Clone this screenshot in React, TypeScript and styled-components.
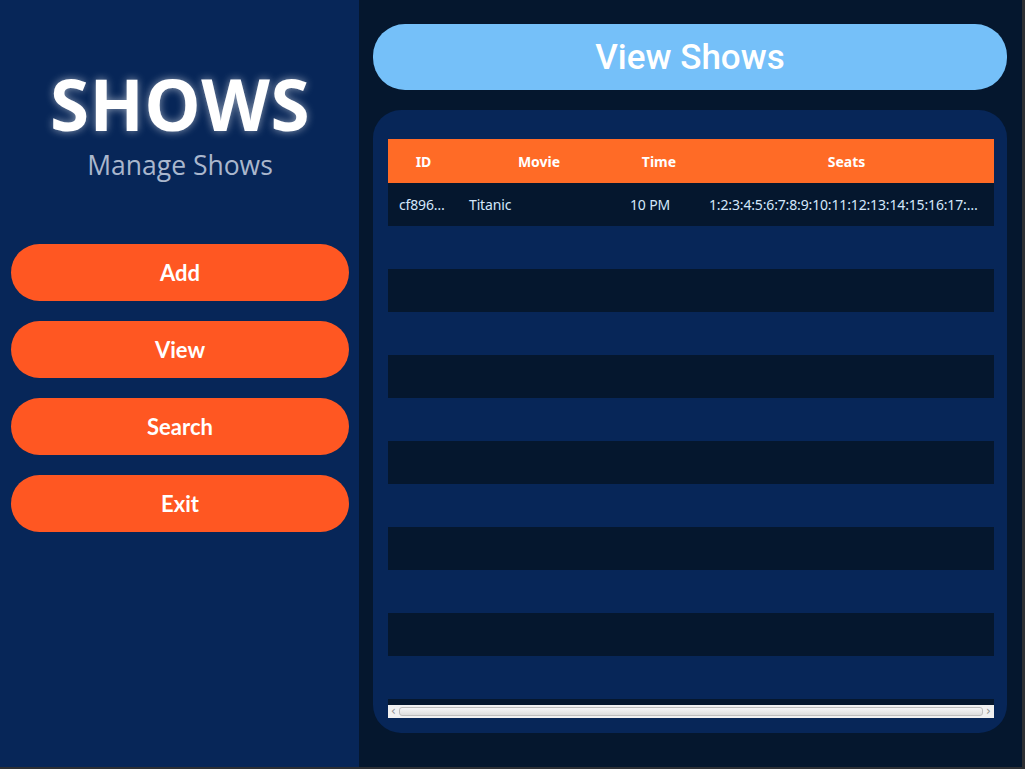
import styled, { createGlobalStyle } from 'styled-components';

type Show = {
  id: string;
  movie: string;
  time: string;
  seats: string;
};

const shows: Show[] = [
  {
    id: 'cf8962a1-4b7e-4d1f-9c3a-2e5b7f0d9a11',
    movie: 'Titanic',
    time: '10 PM',
    seats: Array.from({ length: 40 }, (_, i) => i + 1).join(':'),
  },
];

const EmptyRows = 12;

const GlobalStyle = createGlobalStyle`
  html, body {
    margin: 0;
    padding: 0;
    background: #05172e;
  }
  * {
    box-sizing: border-box;
  }
`;

const Window = styled.div`
  width: 1025px;
  height: 769px;
  display: flex;
  overflow: hidden;
  background: #05172e;
  border-right: 3px solid #2d2f33;
  border-bottom: 2px solid #2d2f33;
`;

const Sidebar = styled.aside`
  width: 359px;
  flex-shrink: 0;
  background: #072658;
  display: flex;
  flex-direction: column;
  align-items: center;
  padding: 62px 10px 0 11px;
`;

const Logo = styled.h1`
  margin: 0;
  font-family: 'Open Sans', 'Noto Sans', sans-serif;
  font-weight: 700;
  font-size: 71px;
  line-height: 84px;
  color: #ffffff;
  letter-spacing: 0.5px;
  text-shadow: 0 0 8px rgba(255, 255, 255, 0.55);
`;

const Tagline = styled.div`
  font-family: 'Open Sans', 'Noto Sans', sans-serif;
  font-size: 26.5px;
  line-height: 36px;
  color: #aab7cd;
  margin-top: 1px;
`;

const Menu = styled.nav`
  width: 100%;
  display: flex;
  flex-direction: column;
  gap: 20px;
  margin-top: 61px;
`;

const MenuButton = styled.button`
  height: 57px;
  width: 100%;
  border: none;
  border-radius: 29px;
  background: #ff5722;
  color: #ffffff;
  font-family: Lato, 'Noto Sans', sans-serif;
  font-weight: 700;
  font-size: 22px;
  cursor: pointer;
`;

const Main = styled.main`
  flex: 1;
  min-width: 0;
  display: flex;
  flex-direction: column;
  padding: 24px 15px 34px 14px;
  gap: 20px;
`;

const TitleBar = styled.div`
  height: 66px;
  flex-shrink: 0;
  border-radius: 32px;
  background: #75c0f9;
  display: flex;
  align-items: center;
  justify-content: center;
  color: #ffffff;
  font-family: Roboto, 'Noto Sans', sans-serif;
  font-weight: 500;
  font-size: 35px;
`;

const Panel = styled.section`
  flex: 1;
  min-height: 0;
  border-radius: 28px;
  background: #072658;
  padding: 29px 13px 15px 15px;
  display: flex;
  flex-direction: column;
`;

const TableFrame = styled.div`
  flex: 1;
  min-height: 0;
  display: flex;
  flex-direction: column;
  overflow: hidden;
`;

const TableBody = styled.div`
  flex: 1;
  min-height: 0;
  overflow: hidden;
`;

const Row = styled.div<{ $head?: boolean; $dark?: boolean }>`
  display: grid;
  grid-template-columns: 70px 161px 79px 1fr;
  height: ${p => (p.$head ? 44 : 43)}px;
  align-items: center;
  background: ${p => (p.$head ? '#ff6b26' : p.$dark ? '#05172e' : '#072658')};
  font-family: 'Noto Sans', 'Open Sans', sans-serif;
  font-size: 14px;
  font-weight: ${p => (p.$head ? 700 : 400)};
  letter-spacing: ${p => (p.$head ? 0 : -0.15)}px;
  color: ${p => (p.$head ? '#ffffff' : '#d4e7fb')};
`;

const Cell = styled.div<{ $center?: boolean }>`
  min-width: 0;
  padding: 0 10px 0 11px;
  white-space: nowrap;
  overflow: hidden;
  text-overflow: ellipsis;
  text-align: ${p => (p.$center ? 'center' : 'left')};
`;

const ScrollBar = styled.div`
  height: 13px;
  flex-shrink: 0;
  background: #f0f0f0;
  display: flex;
  align-items: center;
  padding: 0 2px;
  gap: 2px;
`;

const ScrollArrow = styled.span`
  width: 7px;
  font-family: 'DejaVu Sans', sans-serif;
  font-size: 12px;
  line-height: 13px;
  color: #8f8f8f;
  text-align: center;
`;

const ScrollThumb = styled.div`
  flex: 1;
  height: 9px;
  border: 1px solid #bdbdbd;
  border-radius: 3px;
  background: linear-gradient(#f6f6f6, #dcdcdc);
`;

const App = () => {
  const columns = ['ID', 'Movie', 'Time', 'Seats'];
  return (
    <>
      <GlobalStyle />
      <Window>
        <Sidebar>
          <Logo>SHOWS</Logo>
          <Tagline>Manage Shows</Tagline>
          <Menu>
            {['Add', 'View', 'Search', 'Exit'].map(label => (
              <MenuButton key={label}>{label}</MenuButton>
            ))}
          </Menu>
        </Sidebar>
        <Main>
          <TitleBar>View Shows</TitleBar>
          <Panel>
            <TableFrame>
              <Row $head>
                {columns.map(c => (
                  <Cell key={c} $center>
                    {c}
                  </Cell>
                ))}
              </Row>
              <TableBody>
                {shows.map(show => (
                  <Row key={show.id} $dark>
                    <Cell>{show.id}</Cell>
                    <Cell>{show.movie}</Cell>
                    <Cell>{show.time}</Cell>
                    <Cell>{show.seats}</Cell>
                  </Row>
                ))}
                {Array.from({ length: EmptyRows }, (_, i) => (
                  <Row key={i} $dark={(i + shows.length) % 2 === 0} />
                ))}
              </TableBody>
              <ScrollBar>
                <ScrollArrow>‹</ScrollArrow>
                <ScrollThumb />
                <ScrollArrow>›</ScrollArrow>
              </ScrollBar>
            </TableFrame>
          </Panel>
        </Main>
      </Window>
    </>
  );
};

export default App;
